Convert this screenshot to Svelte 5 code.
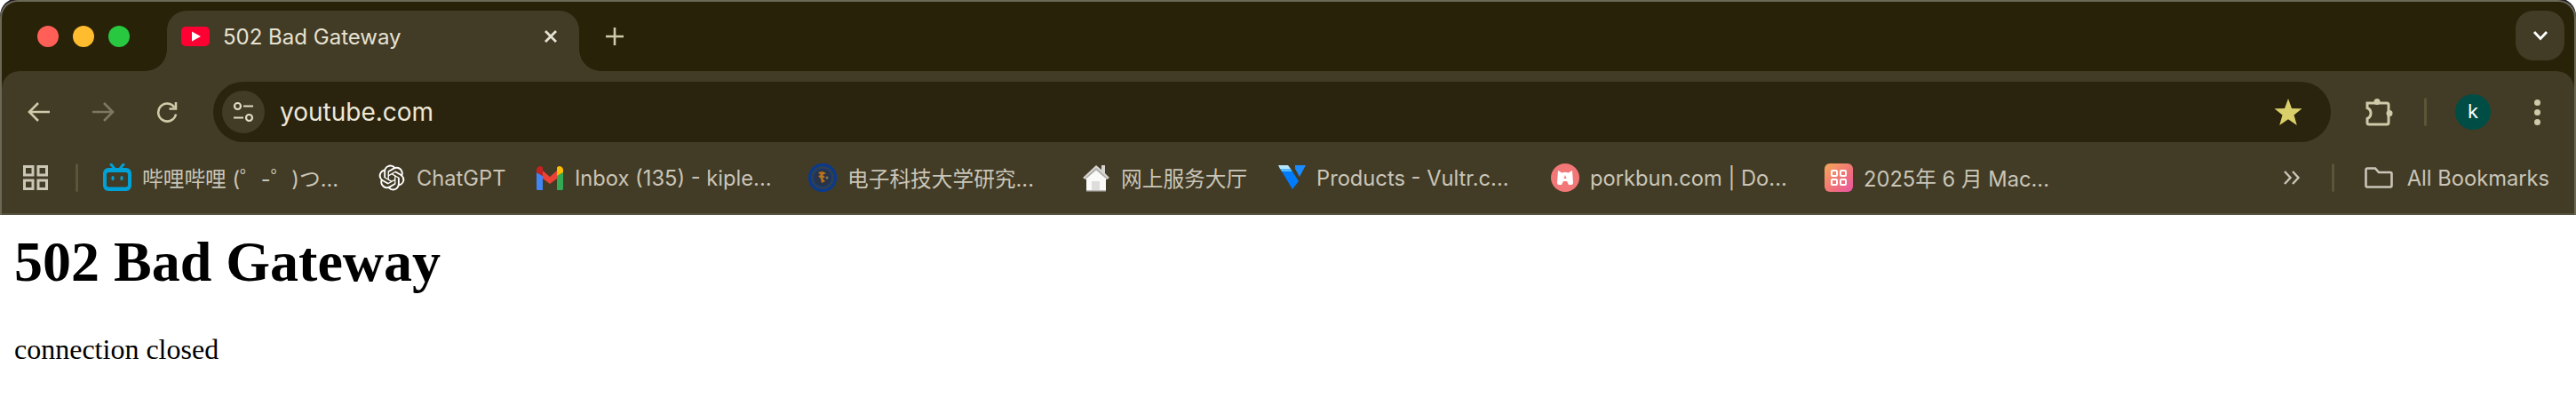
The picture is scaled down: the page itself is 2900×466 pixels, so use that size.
<script>
  const bookmarks = [
    { id: 'bili', title: '哔哩哔哩 (゜-゜)つ...', width: 309 },
    { id: 'gpt', title: 'ChatGPT', width: 178 },
    { id: 'gmail', title: 'Inbox (135) - kiple...', width: 307 },
    { id: 'crest', title: '电子科技大学研究...', width: 308 },
    { id: 'house', title: '网上服务大厅', width: 220 },
    { id: 'vultr', title: 'Products - Vultr.c...', width: 308 },
    { id: 'pork', title: 'porkbun.com | Do...', width: 308 },
    { id: 'mac', title: '2025年 6 月 Mac...', width: 300 }
  ];
</script>

<div class="window">
  <div class="strip">
    <div class="lights">
      <span class="light red"></span>
      <span class="light yellow"></span>
      <span class="light green"></span>
    </div>
    <div class="tab">
      <svg class="favicon" viewBox="0 0 32 22">
        <rect width="32" height="22" rx="5" fill="#ff0033" />
        <path d="M12 5.500 22 11 12 16.500Z" fill="#fff" />
      </svg>
      <span class="tab-title">502 Bad Gateway</span>
      <svg class="close" viewBox="0 0 16 16"><path d="M2 2 14 14M14 2 2 14" /></svg>
    </div>
    <svg class="plus" viewBox="0 0 20 20"><path d="M10 0V20M0 10H20" /></svg>
    <div class="dropdown">
      <svg viewBox="0 0 18 12"><path d="M2 2 9 9.500 16 2" /></svg>
    </div>
  </div>

  <div class="toolbar">
    <div class="nav">
      <button class="slot">
        <svg class="ico" viewBox="0 0 28 24"><path d="M26 12H4M13 2 3 12 13 22" /></svg>
      </button>
      <button class="slot dim">
        <svg class="ico" viewBox="0 0 28 24"><path d="M2 12H24M15 2 25 12 15 22" /></svg>
      </button>
      <button class="slot">
        <svg class="ico" viewBox="0 0 28 26"><path d="M22.500 8A10 10 0 1 0 24 15.500" /><path d="M24 2V9.500H16.500" /></svg>
      </button>
    </div>

    <div class="omnibox">
      <div class="site-info">
        <svg viewBox="0 0 24 24">
          <circle cx="5.500" cy="5.500" r="3.500" />
          <path d="M12 5.500H23M1 18.500H12" />
          <circle cx="18.500" cy="18.500" r="3.500" />
        </svg>
      </div>
      <span class="url">youtube.com</span>
      <svg class="star" viewBox="0 0 32 32">
        <path d="M16 1 20 12 31.500 12.300 22.500 19.500 25.800 31 16 24.300 6.200 31 9.500 19.500 0.500 12.300 12 12Z" fill="#d8cf6b" />
      </svg>
    </div>

    <div class="actions">
      <button class="slot">
        <svg class="puzzle" viewBox="0 0 32 32">
          <path d="M3 6H25A2 2 0 0 1 27 8V28A2 2 0 0 1 25 30H5A2 2 0 0 1 3 28V23.500A6.500 6.500 0 0 0 3 11.500Z" />
          <circle cx="14" cy="4.500" r="3.500" class="knob" />
          <circle cx="28" cy="17.500" r="3.500" class="knob" />
        </svg>
      </button>
      <span class="rule"></span>
      <button class="slot"><span class="avatar">k</span></button>
      <button class="slot">
        <span class="dots"><i></i><i></i><i></i></span>
      </button>
    </div>
  </div>

  <div class="bookmarks">
    <svg class="apps" viewBox="0 0 28 28">
      <rect x="1.500" y="1.500" width="9.500" height="9.500" />
      <rect x="17" y="1.500" width="9.500" height="9.500" />
      <rect x="1.500" y="17" width="9.500" height="9.500" />
      <rect x="17" y="17" width="9.500" height="9.500" />
    </svg>
    <span class="rule first"></span>

    {#each bookmarks as b}
      <div class="bookmark" style="width: {b.width}px">
        <svg class="mark" viewBox="0 0 32 32">
          {#if b.id === 'bili'}
            <path d="M9 1 13 6M23 1 19 6" stroke="#00a1d6" stroke-width="3" stroke-linecap="round" fill="none" />
            <rect y="5" width="32" height="26" rx="6" fill="#00a1d6" />
            <rect x="4" y="10" width="24" height="16.500" rx="2.500" fill="#423b25" />
            <rect x="9.500" y="14" width="3" height="5" rx="1.500" fill="#00a1d6" />
            <rect x="19.500" y="14" width="3" height="5" rx="1.500" fill="#00a1d6" />
          {:else if b.id === 'gpt'}
            <g transform="translate(1.600 1.600) scale(1.200)">
              <path fill="#fff" d="M22.2819 9.8211a5.9847 5.9847 0 0 0-.5157-4.9108 6.0462 6.0462 0 0 0-6.5098-2.9A6.0651 6.0651 0 0 0 4.9807 4.1818a5.9847 5.9847 0 0 0-3.9977 2.9 6.0462 6.0462 0 0 0 .7427 7.0966 5.98 5.98 0 0 0 .511 4.9107 6.051 6.051 0 0 0 6.5146 2.9001A5.9847 5.9847 0 0 0 13.2599 24a6.0557 6.0557 0 0 0 5.7718-4.2058 5.9894 5.9894 0 0 0 3.9977-2.9001 6.0557 6.0557 0 0 0-.7475-7.0729zm-9.022 12.6081a4.4755 4.4755 0 0 1-2.8764-1.0408l.1419-.0804 4.7783-2.7582a.7948.7948 0 0 0 .3927-.6813v-6.7369l2.02 1.1686a.071.071 0 0 1 .038.052v5.5826a4.504 4.504 0 0 1-4.4945 4.4944zm-9.6607-4.1254a4.4708 4.4708 0 0 1-.5346-3.0137l.142.0852 4.783 2.7582a.7712.7712 0 0 0 .7806 0l5.8428-3.3685v2.3324a.0804.0804 0 0 1-.0332.0615L9.74 19.9502a4.4992 4.4992 0 0 1-6.1408-1.6464zM2.3408 7.8956a4.485 4.485 0 0 1 2.3655-1.9728V11.6a.7664.7664 0 0 0 .3879.6765l5.8144 3.3543-2.0201 1.1685a.0757.0757 0 0 1-.071 0l-4.8303-2.7865A4.504 4.504 0 0 1 2.3408 7.872zm16.5963 3.8558L13.1038 8.364 15.1192 7.2a.0757.0757 0 0 1 .071 0l4.8303 2.7913a4.4944 4.4944 0 0 1-.6765 8.1042v-5.6772a.79.79 0 0 0-.407-.667zm2.0107-3.0231l-.142-.0852-4.7735-2.7818a.7759.7759 0 0 0-.7854 0L9.409 9.2297V6.8974a.0662.0662 0 0 1 .0284-.0615l4.8303-2.7866a4.4992 4.4992 0 0 1 6.6802 4.66zM8.3065 12.863l-2.02-1.1638a.0804.0804 0 0 1-.038-.0567V6.0742a4.4992 4.4992 0 0 1 7.3757-3.4537l-.142.0805L8.704 5.459a.7948.7948 0 0 0-.3927.6813zm1.0976-2.3654l2.602-1.4998 2.6069 1.4998v2.9994l-2.5974 1.4997-2.6067-1.4997Z" />
            </g>
          {:else if b.id === 'gmail'}
            <path d="M1 10V28.500A1.500 1.500 0 0 0 2.500 30H8V14Z" fill="#4285f4" />
            <path d="M31 10V28.500A1.500 1.500 0 0 1 29.500 30H24V14Z" fill="#34a853" />
            <path d="M8 8 16 15 24 8V17L16 23 8 17Z" fill="#ea4335" />
            <path d="M1 10V7A4 4 0 0 1 7.500 4L8 4.500V14Z" fill="#c5221f" />
            <path d="M31 10V7A4 4 0 0 0 24.500 4L24 4.500V14Z" fill="#fbbc04" />
          {:else if b.id === 'crest'}
            <circle cx="16" cy="16" r="14.500" fill="#33404a" stroke="#0c3a8a" stroke-width="3.500" />
            <circle cx="16" cy="16" r="10" fill="#2b3346" stroke="#0c3a8a" stroke-width="1" />
            <path d="M11 10 16 9 20 11 16 13 19 15 16 17 19 20 15 22 14 17 11 14 14 13Z" fill="#b8741c" />
            <circle cx="21" cy="16" r="1.500" fill="#7d7a6a" />
          {:else if b.id === 'house'}
            <path d="M22 2H26V11L31 16 28 18H4L1 16 16 2 22 7Z" fill="#d5d4d0" />
            <path d="M4 17 16 6 28 17" fill="none" stroke="#a9a8a3" stroke-width="1.500" />
            <path d="M5 17 16 8 27 17V31H5Z" fill="#fafaf8" />
            <rect x="11" y="20" width="9" height="11" fill="#dedddb" />
            <rect x="5" y="30" width="22" height="1.500" fill="#b5b4b0" />
          {:else if b.id === 'vultr'}
            <path d="M1 2H12L15 6H3Z" fill="#b5e6ff" />
            <path d="M3 6H15L17 9H5Z" fill="#51b9ff" />
            <path d="M5 9H17L24 20 17 29Z" fill="#007bfc" />
            <path d="M20 2H32L25 15 20 6Z" fill="#1a8cff" />
          {:else if b.id === 'pork'}
            <circle cx="16" cy="16" r="16" fill="#f27777" />
            <path d="M8 8 12.500 10.500A8 8 0 0 1 19.500 10.500L24 8 25 22Q25 24 23 24H20L18 20H14L12 24H9Q7 24 7 22Z" fill="#fff" />
            <path d="M16 13 17.500 17H14.500Z" fill="#f27777" />
          {:else}
            <defs>
              <linearGradient id="macg" x1="0" y1="0" x2="1" y2="1">
                <stop offset="0" stop-color="#f6a85a" />
                <stop offset="0.600" stop-color="#f0707a" />
                <stop offset="1" stop-color="#e855a8" />
              </linearGradient>
            </defs>
            <rect width="32" height="32" rx="6" fill="url(#macg)" />
            <g fill="none" stroke="#fff" stroke-width="2">
              <rect x="8" y="8" width="6" height="6" rx="1" />
              <rect x="18" y="8" width="6" height="6" rx="1" />
              <rect x="8" y="18" width="6" height="6" rx="1" />
              <rect x="18" y="18" width="6" height="6" rx="1" />
            </g>
          {/if}
        </svg>
        <span class="label">{b.title}</span>
      </div>
    {/each}

    <div class="bm-right">
      <svg class="more" viewBox="0 0 20 16"><path d="M2 1 8.500 8 2 15M11 1 17.500 8 11 15" /></svg>
      <span class="rule"></span>
      <svg class="folder" viewBox="0 0 32 24"><path d="M1.500 3A1.500 1.500 0 0 1 3 1.500H12L16 6H29A1.500 1.500 0 0 1 30.500 7.500V21A1.500 1.500 0 0 1 29 22.500H3A1.500 1.500 0 0 1 1.500 21Z" /></svg>
      <span class="label">All Bookmarks</span>
    </div>
  </div>
</div>

<main class="page">
  <h1>502 Bad Gateway</h1>
  <p>connection closed</p>
</main>

<style>
  :global(body) {
    margin: 0;
    background: #fff;
    overflow: hidden;
  }

  .window {
    background: #282209;
    border: 2px solid #6b6856;
    border-bottom: 0;
    border-radius: 20px 20px 0 0;
    font-family: Inter, "Noto Sans CJK SC", sans-serif;
    box-shadow: 0 -2px 0 #1d1a24;
  }

  .strip {
    height: 78px;
    display: flex;
    align-items: flex-start;
    padding-left: 40px;
  }
  .lights {
    display: flex;
    gap: 16px;
    margin-top: 27px;
    margin-right: 42px;
  }
  .light {
    width: 24px;
    height: 24px;
    border-radius: 50%;
  }
  .red { background: #ff5f57; }
  .yellow { background: #febc2e; }
  .green { background: #28c840; }

  .tab {
    position: relative;
    width: 464px;
    height: 68px;
    margin-top: 10px;
    background: #423b25;
    border-radius: 22px 22px 0 0;
    display: flex;
    align-items: center;
    padding: 0 24px 10px 16px;
    box-sizing: border-box;
  }
  .tab::before,
  .tab::after {
    content: "";
    position: absolute;
    bottom: 0;
    width: 24px;
    height: 24px;
  }
  .tab::before {
    left: -24px;
    background: radial-gradient(circle at 0 0, transparent 23.500px, #423b25 24px);
  }
  .tab::after {
    right: -24px;
    background: radial-gradient(circle at 100% 0, transparent 23.500px, #423b25 24px);
  }
  .favicon {
    width: 32px;
    height: 22px;
    margin-right: 15px;
    flex: none;
  }
  .tab-title {
    flex: 1;
    color: #e6e2d3;
    font-size: 24px;
    white-space: nowrap;
  }
  .close {
    width: 16px;
    height: 16px;
    fill: none;
    stroke: #e6e2d3;
    stroke-width: 2.800;
  }
  .plus {
    width: 20px;
    height: 20px;
    margin: 29px 0 0 30px;
    fill: none;
    stroke: #cfcaa9;
    stroke-width: 2.600;
  }
  .dropdown {
    width: 55px;
    height: 56px;
    margin: 10px 11px 0 auto;
    border-radius: 20px;
    background: #423b25;
    display: flex;
    align-items: center;
    justify-content: center;
  }
  .dropdown svg {
    width: 18px;
    height: 12px;
    fill: none;
    stroke: #fff;
    stroke-width: 2.800;
  }

  .toolbar {
    height: 92px;
    background: #423b25;
    border-radius: 20px 20px 0 0;
    display: flex;
    align-items: flex-start;
    padding: 12px 6px 0;
    box-sizing: border-box;
  }
  .nav,
  .actions {
    display: flex;
    align-items: center;
    height: 68px;
    flex: none;
  }
  .slot {
    width: 72px;
    height: 68px;
    padding: 0;
    border: 0;
    background: none;
    display: flex;
    align-items: center;
    justify-content: center;
  }
  .ico {
    width: 28px;
    height: 26px;
    fill: none;
    stroke: #cfcaa9;
    stroke-width: 2.600;
  }
  .dim .ico { stroke: #7d7864; }

  .omnibox {
    flex: 1;
    height: 68px;
    margin: 0 18px 0 16px;
    padding: 0 16px 0 10px;
    background: #2a230d;
    border-radius: 34px;
    display: flex;
    align-items: center;
  }
  .site-info {
    width: 48px;
    height: 48px;
    border-radius: 50%;
    background: #423b25;
    display: flex;
    align-items: center;
    justify-content: center;
    margin-right: 17px;
  }
  .site-info svg {
    width: 24px;
    height: 24px;
    fill: none;
    stroke: #e0dcc8;
    stroke-width: 2.200;
  }
  .url {
    color: #ece8d8;
    font-size: 28px;
    flex: 1;
  }
  .star {
    width: 32px;
    height: 32px;
    margin-right: 16px;
  }

  .puzzle {
    width: 32px;
    height: 32px;
    fill: none;
    stroke: #cfcaa9;
    stroke-width: 3;
  }
  .puzzle .knob {
    fill: #cfcaa9;
    stroke: none;
  }
  .rule {
    width: 3px;
    height: 32px;
    border-radius: 2px;
    background: #5b5539;
    flex: none;
  }
  .actions > .rule {
    margin: 0 16px 0 15px;
  }
  .avatar {
    width: 40px;
    height: 40px;
    border-radius: 50%;
    background: #004d45;
    color: #fff;
    font-size: 22px;
    line-height: 38px;
    text-align: center;
    font-family: Inter, sans-serif;
  }
  .dots {
    display: flex;
    flex-direction: column;
    gap: 4px;
  }
  .dots i {
    width: 7px;
    height: 7px;
    border-radius: 50%;
    background: #cfcaa9;
  }

  .bookmarks {
    height: 56px;
    background: #423b25;
    border-bottom: 2px solid #57523f;
    display: flex;
    align-items: flex-start;
    padding: 12px 28px 0 24px;
  }
  .apps {
    width: 28px;
    height: 28px;
    margin-top: 2px;
    fill: none;
    stroke: #cbc7b6;
    stroke-width: 3;
    flex: none;
  }
  .rule.first {
    margin: 0 28px 0 31px;
  }
  .bookmark {
    display: flex;
    align-items: center;
    height: 32px;
    flex: none;
    white-space: nowrap;
  }
  .mark {
    width: 32px;
    height: 32px;
    margin-right: 12px;
    flex: none;
  }
  .label {
    color: #c9c5b8;
    font-size: 23.700px;
    white-space: nowrap;
  }
  .bm-right {
    margin-left: auto;
    display: flex;
    align-items: center;
    height: 32px;
  }
  .more {
    width: 20px;
    height: 16px;
    fill: none;
    stroke: #c9c5b8;
    stroke-width: 2.400;
  }
  .bm-right .rule {
    margin: 0 34px 0 35px;
  }
  .folder {
    width: 32px;
    height: 24px;
    margin-right: 16px;
    fill: none;
    stroke: #c9c5b8;
    stroke-width: 2.600;
  }

  .page {
    padding-left: 16px;
    font-family: "Liberation Serif", serif;
    color: #000;
  }
  h1 {
    font-size: 64px;
    font-weight: 700;
    margin: 16px 0 43px;
  }
  p {
    font-size: 32px;
    margin: 0;
  }
</style>
